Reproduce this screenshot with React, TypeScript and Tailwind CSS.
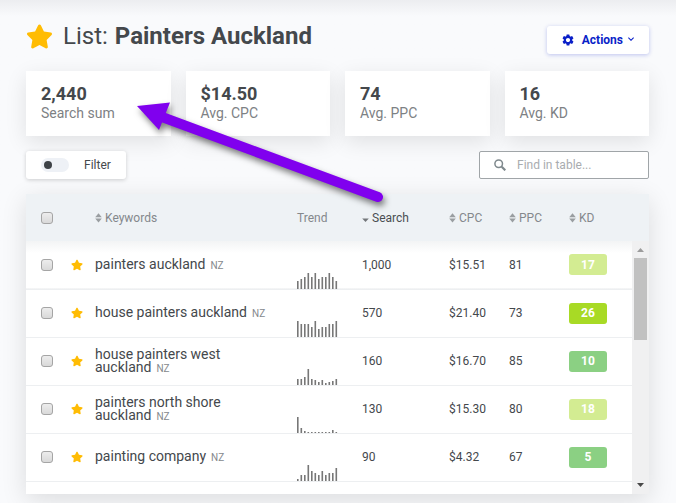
import { FaStar } from "react-icons/fa";
import { MdKeyboardArrowDown, MdSettings } from "react-icons/md";

interface Keyword {
  name: string;
  trend: number[];
  search: string;
  cpc: string;
  ppc: number;
  kd: number;
  kdClass: string;
}

const STATS = [
  { value: "2,440", label: "Search sum" },
  { value: "$14.50", label: "Avg. CPC" },
  { value: "74", label: "Avg. PPC" },
  { value: "16", label: "Avg. KD" },
];

const KEYWORDS: Keyword[] = [
  {
    name: "painters auckland",
    trend: [8, 10, 12, 16, 12, 16, 10, 12, 12, 16, 12, 8],
    search: "1,000",
    cpc: "$15.51",
    ppc: 81,
    kd: 17,
    kdClass: "bg-[#d3ec92]",
  },
  {
    name: "house painters auckland",
    trend: [16, 13, 13, 13, 10, 16, 8, 10, 10, 13, 13, 16],
    search: "570",
    cpc: "$21.40",
    ppc: 73,
    kd: 26,
    kdClass: "bg-[#a8da25]",
  },
  {
    name: "house painters west auckland",
    trend: [6, 6, 8, 16, 6, 5, 3, 5, 2, 3, 4, 6],
    search: "160",
    cpc: "$16.70",
    ppc: 85,
    kd: 10,
    kdClass: "bg-[#8bd083]",
  },
  {
    name: "painters north shore auckland",
    trend: [16, 5, 2, 1, 1, 1, 1, 1, 1, 1, 3, 1],
    search: "130",
    cpc: "$15.30",
    ppc: 80,
    kd: 18,
    kdClass: "bg-[#d3ec92]",
  },
  {
    name: "painting company",
    trend: [2, 6, 6, 16, 10, 8, 6, 10, 6, 8, 8, 13],
    search: "90",
    cpc: "$4.32",
    ppc: 67,
    kd: 5,
    kdClass: "bg-[#8bd083]",
  },
];

const SearchIcon = () => (
  <svg
    width="12"
    height="12"
    viewBox="0 0 12 12"
    fill="none"
    stroke="#7f898d"
    className="mr-[11px] shrink-0"
    aria-hidden="true"
  >
    <circle cx="4.7" cy="4.7" r="3.8" strokeWidth="1.5" />
    <path d="m7.700 7.700 3.600 3.600" strokeWidth="2.2" />
  </svg>
);

const SortIcon = ({ active = false }: { active?: boolean }) => (
  <svg width="7" height="10" viewBox="0 0 7 10" className="shrink-0" aria-hidden="true">
    {!active && <path d="M3.5 0.3 6.8 4.200H.2z" fill="#9a9ea1" />}
    <path d={active ? "M.2 5.5h6.6L3.5 9z" : "M.2 5.600h6.600L3.5 9.5z"} fill={active ? "#73777a" : "#9a9ea1"} />
  </svg>
);

const SortHeader = ({ label, active = false }: { label: string; active?: boolean }) => (
  <th scope="col" className="p-0 text-left font-normal">
    <button type="button" className={`flex items-center gap-[3px] ${active ? "text-[#4a4e52]" : ""}`}>
      <SortIcon active={active} />
      {label}
    </button>
  </th>
);

const Checkbox = ({ label }: { label: string }) => (
  <input
    type="checkbox"
    aria-label={label}
    className="block size-3 appearance-none rounded-[3px] border border-[#a5a5a5] bg-linear-to-b from-[#ededed] to-[#d9d9d9]"
  />
);

const TrendChart = ({ values }: { values: number[] }) => (
  <svg width="41" height="16" viewBox="0 0 41 16" className="block" aria-hidden="true">
    {values.map((v, i) => (
      <rect key={i} x={i * 3.5} y={16 - v} width="1.6" height={v} fill="#777" />
    ))}
  </svg>
);

const App = () => {
  return (
    <main className="relative bg-[#f9fafc] bg-linear-to-b from-[#ecedf0] to-[#f9fafc] to-[16px] pt-[22px] pr-[27px] pb-[10px] pl-[26px] font-[Roboto,'Liberation_Sans',sans-serif] text-[#44484c]">
      <header className="flex h-[49px] items-start justify-between">
        <h1 className="flex items-center text-2xl leading-7 font-normal">
          <FaStar className="mr-[10px] size-[27px] text-[#ffbc04]" aria-hidden="true" />
          List:<strong className="ml-[7px] font-bold">Painters Auckland</strong>
        </h1>
        <button
          type="button"
          className="mt-1 flex h-7 items-center rounded-[3px] bg-white pr-3 pl-[14px] text-xs font-bold text-[#0a1fc8] shadow-[0_1px_4px_#0a1fc840]"
        >
          <MdSettings className="mr-[7px] size-[14px]" aria-hidden="true" />
          Actions
          <MdKeyboardArrowDown className="mb-[2px] ml-[2px] size-3" aria-hidden="true" />
        </button>
      </header>

      <section className="grid grid-cols-4 gap-[15px]">
        {STATS.map((stat) => (
          <div key={stat.label} className="h-[65px] bg-white px-[15px] pt-3 shadow-[0_6px_20px_#0000001a]">
            <p className="text-lg leading-[22px] font-bold">{stat.value}</p>
            <p className="text-sm leading-4 text-[#7d8184]">{stat.label}</p>
          </div>
        ))}
      </section>

      <div className="my-[15px] flex justify-between text-xs">
        <button
          type="button"
          role="switch"
          aria-checked="false"
          className="flex h-7 items-center gap-[15px] rounded-[3px] bg-white px-[15px] shadow-[0_1px_4px_#0000002e]"
        >
          <span className="flex h-[14px] w-7 items-center rounded-full bg-[#eef1f6] pl-[3px]">
            <span className="size-2 rounded-full bg-[#3e4247]" />
          </span>
          Filter
        </button>
        <label className="flex h-7 w-[170px] items-center rounded-[2px] border border-[#a0a5a8] bg-white pl-[14px]">
          <SearchIcon />
          <input
            type="text"
            aria-label="Find in table"
            placeholder="Find in table..."
            className="w-full min-w-0 outline-none placeholder:text-[#a9acaf]"
          />
        </label>
      </div>

      <section className="flex bg-white shadow-[0_6px_24px_#0000001f]">
        <div className="min-w-0 flex-1 pb-3">
          <table className="w-full table-fixed border-collapse text-xs">
            <colgroup>
              <col className="w-[45px]" />
              <col className="w-6" />
              <col />
              <col className="w-[65px]" />
              <col className="w-[87px]" />
              <col className="w-[60px]" />
              <col className="w-[60px]" />
              <col className="w-[63px]" />
            </colgroup>
            <thead>
              <tr className="h-[47px] bg-[#eef2f5] text-[#84888c]">
                <th scope="col" className="p-0 pl-[15px]">
                  <Checkbox label="Select all keywords" />
                </th>
                <th scope="col" className="p-0" aria-label="Starred" />
                <SortHeader label="Keywords" />
                <th scope="col" className="p-0 text-left font-normal">
                  Trend
                </th>
                <SortHeader label="Search" active />
                <SortHeader label="CPC" />
                <SortHeader label="PPC" />
                <SortHeader label="KD" />
              </tr>
            </thead>
            <tbody>
              {KEYWORDS.map((kw) => (
                <tr
                  key={kw.name}
                  className="h-12 border-b border-[#edeff1] first:bg-linear-to-b first:from-[#f3f4f5] first:to-white first:to-[12px]"
                >
                  <td className="p-0 pl-[15px]">
                    <Checkbox label={`Select ${kw.name}`} />
                  </td>
                  <td className="p-0">
                    <FaStar className="size-3 text-[#ffbc04]" aria-label="Starred" />
                  </td>
                  <td className="p-0 pr-7 text-sm leading-[13px]">
                    {kw.name}
                    <small className="ml-[5px] text-[10px] text-[#85898d]">NZ</small>
                  </td>
                  <td className="p-0 align-bottom">
                    <TrendChart values={kw.trend} />
                  </td>
                  <td className="p-0">{kw.search}</td>
                  <td className="p-0">{kw.cpc}</td>
                  <td className="p-0">{kw.ppc}</td>
                  <td className="p-0">
                    <span className={`flex h-[21px] w-[38px] items-center justify-center rounded-[3px] font-bold text-white ${kw.kdClass}`}>
                      {kw.kd}
                    </span>
                  </td>
                </tr>
              ))}
            </tbody>
          </table>
        </div>

        {/* Scrollbar */}
        <div className="flex w-[17px] flex-col items-center bg-[#f0f0f1]" aria-hidden="true">
          <div className="h-[47px] w-full bg-[#eef2f5]" />
          <svg width="17" height="17" viewBox="0 0 17 17">
            <path d="M5 11h7L8.5 7z" fill="#9c9c9c" />
          </svg>
          <div className="h-[82px] w-[13px] bg-[#c1c1c1]" />
          <svg width="17" height="17" viewBox="0 0 17 17" className="mt-auto">
            <path d="M5 6h7l-3.500 4z" fill="#484848" />
          </svg>
        </div>
      </section>

      {/* Arrow pointing at the search sum */}
      <svg
        width="260"
        height="120"
        viewBox="0 0 260 120"
        className="pointer-events-none absolute top-[95px] left-[130px] drop-shadow-[2px_4px_3px_#00000080]"
        aria-hidden="true"
      >
        <path d="M32 22 248 102" stroke="#8000ee" strokeWidth="10" strokeLinecap="round" />
        <path d="M7 11 40 7.500 29 35z" fill="#8000ee" />
      </svg>
    </main>
  );
};

export default App;
